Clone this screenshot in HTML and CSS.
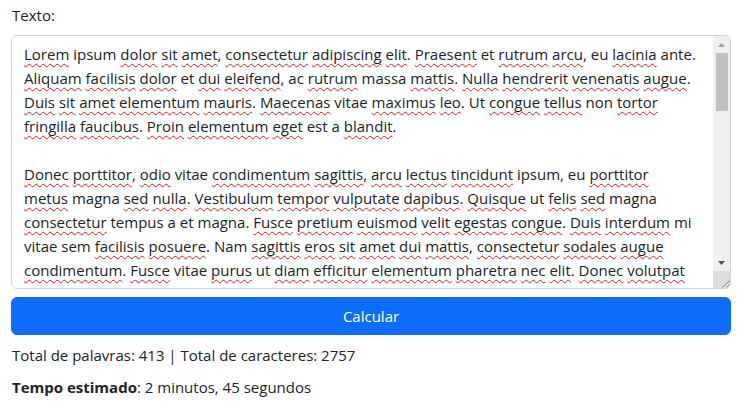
FILE: index.html
```html
<!DOCTYPE html>
<html lang="pt-BR">
<head>
<meta charset="utf-8">
<title>Tempo de leitura</title>
<link rel="stylesheet" href="styles.css">
</head>
<body>
<main class="page">
  <label class="label" for="texto">Texto:</label>
  <div class="field">
    <div class="editor" id="texto" role="textbox" aria-multiline="true" contenteditable="true" spellcheck="true">
      <p><u>Lorem</u> ipsum <u>dolor</u> <u>sit</u> <u>amet</u>, <u>consectetur</u> <u>adipiscing</u> <u>elit</u>. <u>Praesent</u> et <u>rutrum</u> <u>arcu</u>, eu <u>lacinia</u> ante.<br><u>Aliquam</u> <u>facilisis</u> <u>dolor</u> et <u>dui</u> <u>eleifend</u>, ac <u>rutrum</u> massa <u>mattis</u>. <u>Nulla</u> <u>hendrerit</u> <u>venenatis</u> <u>augue</u>.<br><u>Duis</u> <u>sit</u> <u>amet</u> <u>elementum</u> <u>mauris</u>. <u>Maecenas</u> vitae <u>maximus</u> <u>leo</u>. Ut <u>congue</u> <u>tellus</u> non <u>tortor</u><br><u>fringilla</u> <u>faucibus</u>. <u>Proin</u> <u>elementum</u> <u>eget</u> est a <u>blandit</u>.</p>
      <p><u>Donec</u> <u>porttitor</u>, <u>odio</u> vitae <u>condimentum</u> <u>sagittis</u>, <u>arcu</u> <u>lectus</u> <u>tincidunt</u> ipsum, eu <u>porttitor</u><br><u>metus</u> magna <u>sed</u> <u>nulla</u>. <u>Vestibulum</u> <u>tempor</u> <u>vulputate</u> <u>dapibus</u>. <u>Quisque</u> ut <u>felis</u> <u>sed</u> magna<br><u>consectetur</u> tempus a et magna. <u>Fusce</u> <u>pretium</u> <u>euismod</u> <u>velit</u> <u>egestas</u> <u>congue</u>. <u>Duis</u> <u>interdum</u> mi<br>vitae sem <u>facilisis</u> <u>posuere</u>. Nam <u>sagittis</u> <u>eros</u> <u>sit</u> <u>amet</u> <u>dui</u> <u>mattis</u>, <u>consectetur</u> <u>sodales</u> <u>augue</u><br><u>condimentum</u>. <u>Fusce</u> vitae <u>purus</u> ut <u>diam</u> <u>efficitur</u> <u>elementum</u> <u>pharetra</u> <u>nec</u> <u>elit</u>. <u>Donec</u> <u>volutpat</u> <u>risus</u> et <u>nibh</u> <u>convallis</u>, in <u>ultrices</u> <u>lorem</u> <u>feugiat</u>. <u>Curabitur</u> <u>accumsan</u> <u>ligula</u> vitae <u>justo</u> <u>dictum</u>, non <u>pulvinar</u> <u>ipsum</u> <u>ornare</u>. <u>Integer</u> <u>vel</u> <u>lacus</u> et <u>risus</u> <u>aliquet</u> <u>ultricies</u> sed non <u>magna</u>. <u>Morbi</u> <u>lobortis</u> <u>velit</u> a <u>turpis</u> <u>placerat</u>, et <u>laoreet</u> <u>nisl</u> <u>fermentum</u>.</p>
      <p><u>Pellentesque</u> <u>habitant</u> <u>morbi</u> <u>tristique</u> <u>senectus</u> et <u>netus</u> et <u>malesuada</u> <u>fames</u> ac <u>turpis</u> <u>egestas</u>. <u>Suspendisse</u> <u>potenti</u>. <u>Nunc</u> <u>consequat</u> <u>urna</u> <u>quis</u> <u>neque</u> <u>vehicula</u>, a <u>gravida</u> <u>tortor</u> <u>scelerisque</u>. <u>Etiam</u> <u>luctus</u> <u>nisi</u> <u>quis</u> <u>libero</u> <u>cursus</u>, <u>eget</u> <u>semper</u> <u>odio</u> <u>pretium</u>. <u>Vivamus</u> <u>iaculis</u> <u>nunc</u> <u>eget</u> <u>massa</u> <u>dignissim</u>, <u>vel</u> <u>faucibus</u> <u>nulla</u> <u>vestibulum</u>.</p>
      <p><u>Nullam</u> <u>eleifend</u> <u>libero</u> sit <u>amet</u> <u>sem</u> <u>sodales</u>, <u>eget</u> <u>vulputate</u> <u>erat</u> <u>tincidunt</u>. <u>Cras</u> <u>maximus</u> <u>metus</u> <u>ut</u> <u>arcu</u> <u>malesuada</u>, a <u>fringilla</u> <u>neque</u> <u>sollicitudin</u>. <u>Sed</u> <u>posuere</u> <u>dolor</u> <u>eget</u> <u>lorem</u> <u>consequat</u>, non <u>egestas</u> <u>massa</u> <u>euismod</u>.</p>
    </div>
    <div class="scrollbar" aria-hidden="true">
      <div class="sb-btn">
        <svg width="7" height="4" viewBox="0 0 7 4"><path d="M0 4 3.5 0 7 4z" fill="#a3a3a3"/></svg>
      </div>
      <div class="sb-track"><div class="sb-thumb"></div></div>
      <div class="sb-btn">
        <svg width="7" height="4" viewBox="0 0 7 4"><path d="M0 0 3.5 4 7 0z" fill="#505050"/></svg>
      </div>
      <div class="sb-corner">
        <svg width="17" height="17" viewBox="0 0 17 17"><path d="M16.5 9.5 9.5 16.5M16.5 13.5 13.5 16.5" stroke="#8a8a8a" stroke-width="1"/></svg>
      </div>
    </div>
  </div>
  <button class="btn" type="button">Calcular</button>
  <p class="stat">Total de palavras: 413 | Total de caracteres: 2757</p>
  <p class="stat"><strong class="strong">Tempo estimado</strong>: 2 minutos, 45 segundos</p>
</main>
</body>
</html>
```
FILE: styles.css
```css
* { box-sizing: border-box; }

body {
  margin: 0;
  font-family: "Open Sans", "Noto Sans", sans-serif;
  font-size: 15px;
  line-height: 24px;
  color: #212529;
  background: #fff;
}

.page {
  width: 720px;
  margin-left: 11px;
  padding-top: 3px;
  display: flex;
  flex-direction: column;
}

.label {
  display: block;
  margin-bottom: 8px;
  padding-left: 1px;
}

.field {
  display: flex;
  height: 254px;
  border: 1px solid #ced4da;
  border-radius: 6px;
  background: #fff;
  overflow: hidden;
}

.editor {
  flex: 1;
  min-width: 0;
  padding: 6px 12px;
  overflow: hidden;
  outline: none;
  line-height: 24px;
}

.editor p {
  margin: 0 0 24px;
}

.editor u {
  text-decoration-line: underline;
  text-decoration-style: wavy;
  text-decoration-color: #e0161b;
  text-decoration-thickness: 1px;
  text-underline-offset: 3px;
  text-decoration-skip-ink: none;
}

.scrollbar {
  width: 17px;
  flex: none;
  display: flex;
  flex-direction: column;
  background: #f0f0f0;
}

.sb-btn {
  height: 17px;
  flex: none;
  display: flex;
  align-items: center;
  justify-content: center;
}

.sb-track {
  flex: 1;
  display: flex;
  flex-direction: column;
  padding: 0 2px 0 3px;
}

.sb-thumb {
  height: 58px;
  background: #c1c1c1;
}

.sb-corner {
  height: 17px;
  flex: none;
  background: #dcdcdc;
}

.sb-corner svg {
  display: block;
}

.btn {
  margin-top: 8px;
  height: 38px;
  padding: 6px 12px;
  border: 1px solid #0d6efd;
  border-radius: 6px;
  background: #0d6efd;
  color: #fff;
  font: inherit;
  line-height: 24px;
  cursor: pointer;
}

.stat {
  margin: 8px 0 0;
  padding-left: 1px;
}

.strong {
  font-weight: 700;
}
```
